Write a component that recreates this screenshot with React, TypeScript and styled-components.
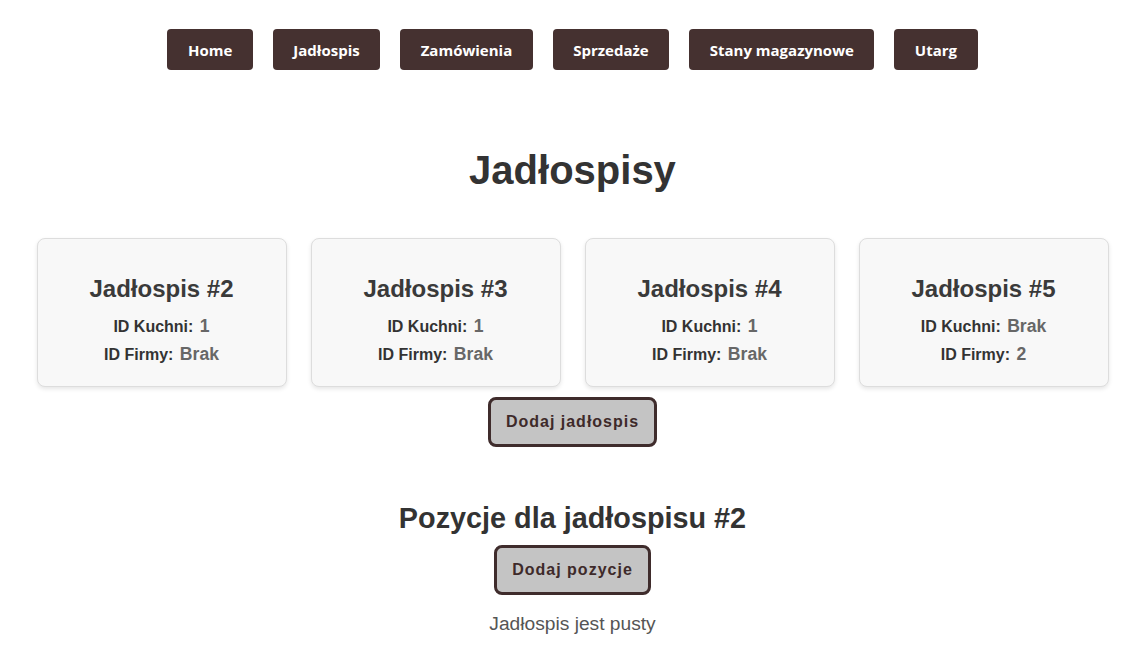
import React from "react";
import styled, { createGlobalStyle } from "styled-components";

const Global = createGlobalStyle`
  html, body { margin: 0; padding: 0; background: #ffffff; }
  body { font-family: "Liberation Sans", Arial, sans-serif; color: #333333; }
`;

const Page = styled.div`
  display: flex;
  flex-direction: column;
  align-items: center;
`;

const Nav = styled.nav`
  display: flex;
  justify-content: center;
  gap: 20px;
  padding-top: 29px;
`;

const NavButton = styled.button`
  height: 41px;
  padding: 0 20.5px;
  border: none;
  border-radius: 4px;
  background: #453130;
  color: #ffffff;
  font-family: "Open Sans", "Segoe UI", sans-serif;
  font-weight: 700;
  font-size: 15px;
  cursor: pointer;
`;

const Title = styled.h1`
  margin: 77px 0 0;
  font-size: 40px;
  line-height: 46px;
  font-weight: 700;
  color: #333333;
`;

const CardRow = styled.div`
  display: flex;
  gap: 24px;
  margin-top: 45px;
`;

const Card = styled.div`
  width: 250px;
  box-sizing: border-box;
  padding: 20px 20px 17px;
  border: 1px solid #dddddd;
  border-radius: 8px;
  background: #f8f8f8;
  box-shadow: 0 2px 4px rgba(0, 0, 0, 0.1);
  text-align: center;
`;

const CardTitle = styled.h3`
  margin: 16px 0 10px;
  font-size: 24px;
  line-height: 27.6px;
  font-weight: 700;
  color: #3a3a3a;
`;

const InfoLine = styled.p`
  margin: 0;
  font-size: 16px;
  line-height: 28px;
  font-weight: 700;
  color: #333333;
`;

const InfoValue = styled.span`
  font-size: 17.6px;
  line-height: 1;
  color: #676767;
  margin-left: 2px;
`;

const ActionButton = styled.button<{ $top: number }>`
  margin-top: ${(p) => p.$top}px;
  padding: 13px 15px;
  border: 3px solid #3f2c2c;
  border-radius: 8px;
  background: #c4c4c4;
  color: #3e2a2a;
  font-family: "Liberation Sans", Arial, sans-serif;
  font-weight: 700;
  font-size: 16px;
  line-height: 18px;
  letter-spacing: 1px;
  cursor: pointer;
`;

const SubTitle = styled.h2`
  margin: 55px 0 0;
  font-size: 28.8px;
  line-height: 33px;
  font-weight: 700;
  color: #333333;
`;

const EmptyText = styled.p`
  margin: 18px 0 0;
  font-size: 19.2px;
  line-height: 22px;
  color: #555555;
`;

const navItems = ["Home", "Jadłospis", "Zamówienia", "Sprzedaże", "Stany magazynowe", "Utarg"];

const menus = [
  { id: 2, kuchnia: "1", firma: "Brak" },
  { id: 3, kuchnia: "1", firma: "Brak" },
  { id: 4, kuchnia: "1", firma: "Brak" },
  { id: 5, kuchnia: "Brak", firma: "2" },
];

export default function App() {
  return (
    <>
      <Global />
      <Page>
        <Nav>
          {navItems.map((n) => (
            <NavButton key={n}>{n}</NavButton>
          ))}
        </Nav>
        <Title>Jadłospisy</Title>
        <CardRow>
          {menus.map((m) => (
            <Card key={m.id}>
              <CardTitle>Jadłospis #{m.id}</CardTitle>
              <InfoLine>
                ID Kuchni: <InfoValue>{m.kuchnia}</InfoValue>
              </InfoLine>
              <InfoLine>
                ID Firmy: <InfoValue>{m.firma}</InfoValue>
              </InfoLine>
            </Card>
          ))}
        </CardRow>
        <ActionButton $top={10}>Dodaj jadłospis</ActionButton>
        <SubTitle>Pozycje dla jadłospisu #2</SubTitle>
        <ActionButton $top={10}>Dodaj pozycje</ActionButton>
        <EmptyText>Jadłospis jest pusty</EmptyText>
      </Page>
    </>
  );
}
